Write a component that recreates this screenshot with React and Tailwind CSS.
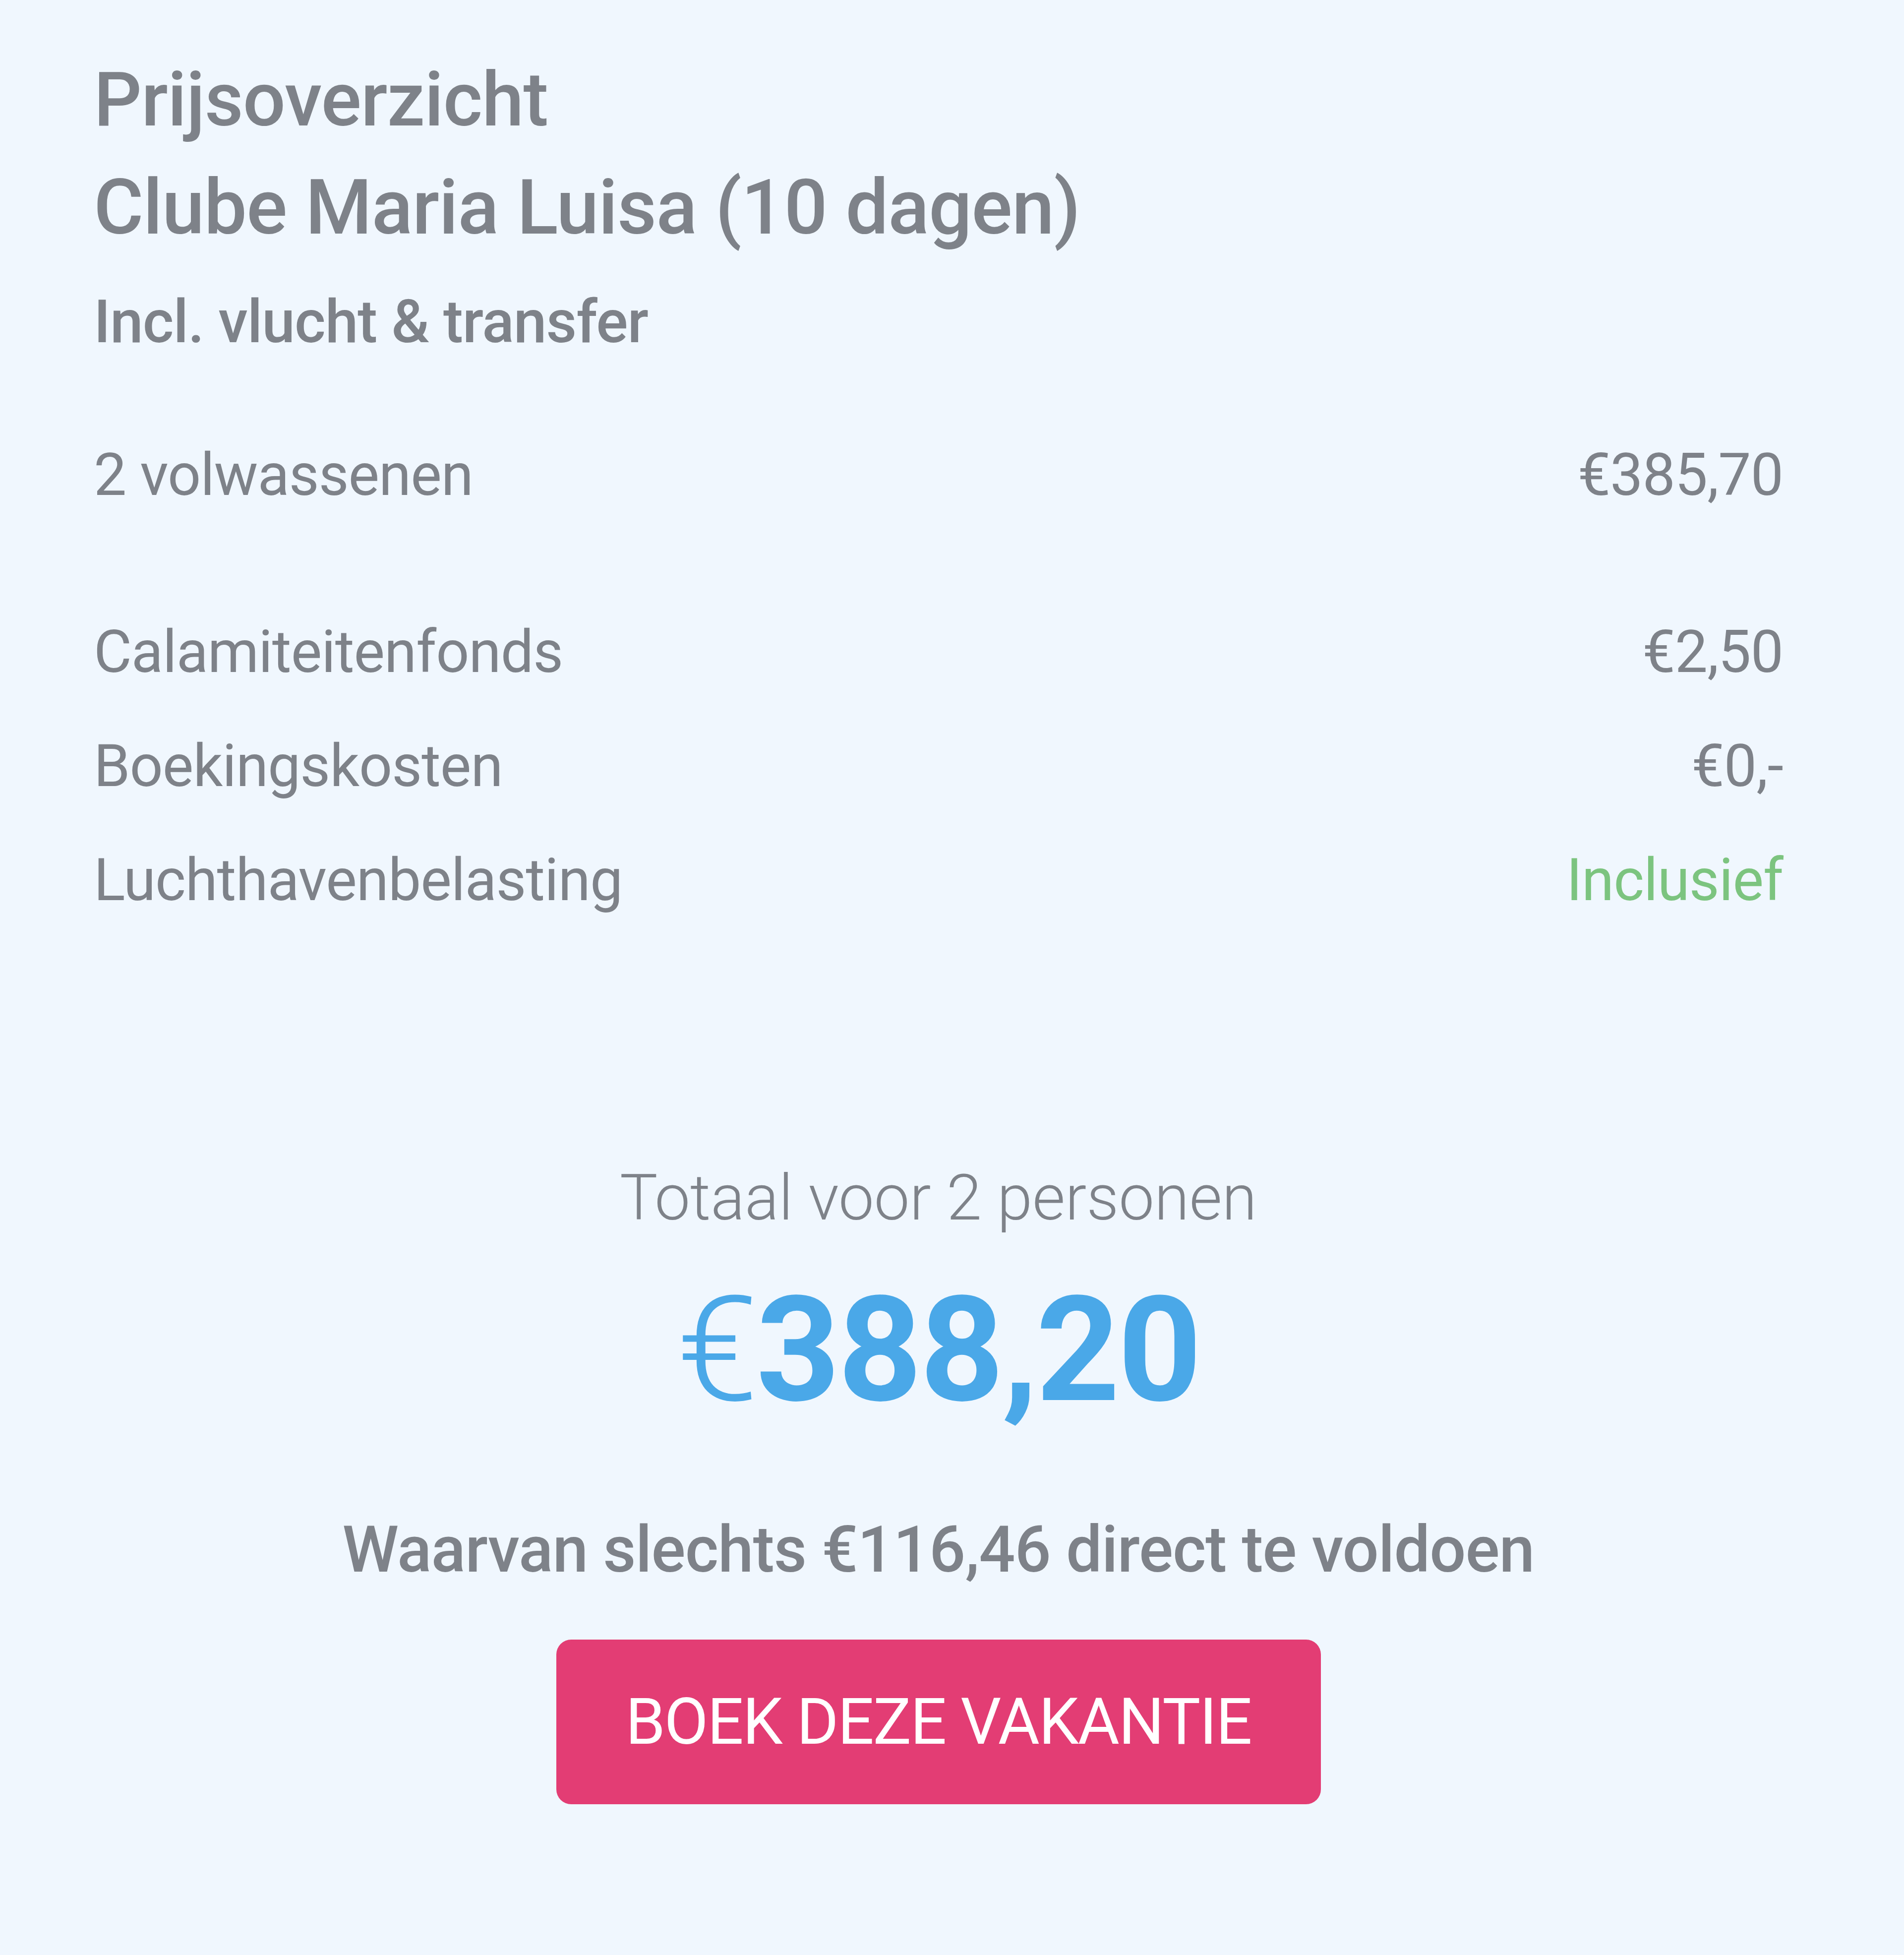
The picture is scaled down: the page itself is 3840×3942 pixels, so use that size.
export default function App() {
  const rowCls = "flex justify-between items-center h-[230px] text-[118px] font-normal leading-[230px] tracking-[-1px]";
  return (
    <div className="w-[3840px] h-[3942px] bg-[#f0f7fe] text-[#7e8289] pl-[189px] pr-[244px] pt-[92px]" style={{ fontFamily: "Roboto, 'Noto Sans', sans-serif" }}>
      <div className="text-[152px] font-medium leading-[218px] tracking-[-1px]">Prijsoverzicht</div>
      <div className="text-[154px] font-medium leading-[218px] tracking-[-1px]">Clube Maria Luisa (10 dagen)</div>
      <div className="text-[120px] font-medium leading-[242px] tracking-[-1px]">Incl. vlucht &amp; transfer</div>

      <div className="mt-[73px]">
        <div className={rowCls}>
          <span>2 volwassenen</span>
          <span>€385,70</span>
        </div>
      </div>
      <div className="mt-[127px]">
        <div className={rowCls}>
          <span>Calamiteitenfonds</span>
          <span>€2,50</span>
        </div>
        <div className={rowCls}>
          <span>Boekingskosten</span>
          <span>€0,-</span>
        </div>
        <div className={rowCls}>
          <span>Luchthavenbelasting</span>
          <span className="text-[#7cc47f]">Inclusief</span>
        </div>
      </div>

      <div className="mt-[435px] flex flex-col items-center">
        <div className="text-[128px] font-light leading-[180px]">Totaal voor 2 personen</div>
        <div className="mt-[52px] text-[295px] leading-[330px] text-[#4aa8e8] tracking-[-4px]">
          <span className="font-light">€</span>
          <span className="font-bold">388,20</span>
        </div>
        <div className="mt-[148px] text-[129px] font-medium leading-[180px] tracking-[-1px]">
          Waarvan slechts €116,46 direct te voldoen
        </div>
        <button className="mt-[91px] w-[1542px] h-[332px] rounded-[30px] bg-[#e33d74] text-white text-[129px] font-normal tracking-[-2px] flex items-center justify-center">
          BOEK DEZE VAKANTIE
        </button>
      </div>
    </div>
  );
}
